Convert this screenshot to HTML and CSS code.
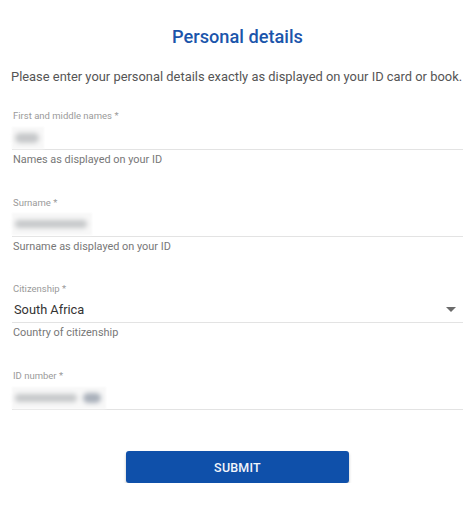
FILE: index.html
```html
<!DOCTYPE html>
<html>
<head>
<meta charset="utf-8">
<link rel="stylesheet" href="styles.css">
</head>
<body>
<main class="page">
  <h1 class="title">Personal details</h1>
  <p class="intro">Please enter your personal details exactly as displayed on your ID card or book.</p>

  <div class="field">
    <label class="label">First and middle names *</label>
    <div class="control">
      <span class="blur-patch"><span class="blob" style="width:24px"></span></span>
    </div>
    <div class="helper">Names as displayed on your ID</div>
  </div>

  <div class="field">
    <label class="label">Surname *</label>
    <div class="control">
      <span class="blur-patch"><span class="blob thin" style="width:72px"></span></span>
    </div>
    <div class="helper">Surname as displayed on your ID</div>
  </div>

  <div class="field">
    <label class="label">Citizenship *</label>
    <div class="control select">
      <span class="value">South Africa</span>
      <svg class="caret" width="10" height="5" viewBox="0 0 10 5"><path d="M0 0h10L5 5z" fill="#6b6b6b"/></svg>
    </div>
    <div class="helper">Country of citizenship</div>
  </div>

  <div class="field last">
    <label class="label">ID number *</label>
    <div class="control">
      <span class="blur-patch"><span class="blob thin" style="width:62px"></span><span class="blob dark" style="width:18px"></span></span>
    </div>
  </div>

  <div class="actions">
    <button class="submit">SUBMIT</button>
  </div>
</main>
</body>
</html>
```

FILE: styles.css
```css
html, body {
  margin: 0;
  padding: 0;
  background: #fff;
}
body {
  font-family: Roboto, "Liberation Sans", Arial, sans-serif;
}
.page {
  width: 451px;
  padding: 0 8px 0 12px;
  display: flex;
  flex-direction: column;
}
.title {
  margin: 25px 0 0;
  text-align: center;
  font-size: 18.2px;
  font-weight: 500;
  color: #1b55ab;
  line-height: 24px;
}
.intro {
  margin: 20px 0 0 -1px;
  font-size: 12.9px;
  line-height: 16px;
  color: #555;
  white-space: nowrap;
}
.field {
  display: flex;
  flex-direction: column;
  margin-top: 25px;
}
.field + .field {
  margin-top: 29.7px;
}
.label {
  font-size: 9.5px;
  line-height: 12px;
  color: #9a9a9a;
  padding-left: 1px;
}
.control {
  height: 27px;
  border-bottom: 1px solid #e3e3e3;
  display: flex;
  align-items: center;
}
.blur-patch {
  display: flex;
  align-items: center;
  gap: 6px;
  padding: 0 5px 0 3px;
  height: 22px;
  margin-top: 4px;
  background: #f8f8f8;
  filter: blur(1px);
}
.blob {
  height: 10px;
  border-radius: 5px;
  background: #c6c8ca;
  filter: blur(2px);
}
.blob.thin {
  height: 8px;
}
.blob.dark {
  background: #a9b0ba;
}
.select {
  justify-content: space-between;
  padding-left: 2px;
  padding-right: 7px;
}
.value {
  font-size: 12.8px;
  color: #333;
  margin-top: 1px;
}
.caret {
  margin-top: 1px;
}
.helper {
  margin-top: 3px;
  font-size: 10.9px;
  line-height: 14px;
  color: #777;
  padding-left: 1px;
}
.actions {
  display: flex;
  justify-content: center;
  margin-top: 41px;
}
.submit {
  width: 223px;
  height: 32px;
  border: none;
  border-radius: 3px;
  background: #0f50aa;
  color: #f2f5fa;
  font-family: Roboto, "Liberation Sans", Arial, sans-serif;
  font-size: 12.5px;
  font-weight: 500;
  letter-spacing: 0.2px;
  box-shadow: 0 2px 3px rgba(0,0,0,0.25);
}
```
